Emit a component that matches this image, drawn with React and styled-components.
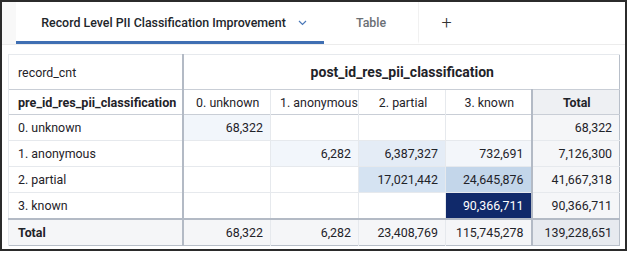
import React from 'react';
import styled, { createGlobalStyle, css } from 'styled-components';

const Global = createGlobalStyle`
  body {
    margin: 0;
    background: #fff;
    font-family: Roboto, "Liberation Sans", sans-serif;
    color: #1f2329;
  }
`;

const Frame = styled.div`
  box-sizing: border-box;
  width: 627px;
  height: 251px;
  border: 2px solid #2b2b2b;
  background: #fff;
`;

const TabBar = styled.div`
  display: flex;
  height: 42px;
  border-bottom: 1px solid #ececec;
  padding-left: 14px;
  background: linear-gradient(to right, #f8f8f8 14px, #fff 14px);
`;

const Tab = styled.div`
  display: flex;
  align-items: center;
  justify-content: center;
  gap: 12px;
  box-sizing: border-box;
  width: ${p => p.$w}px;
  padding: 2px 0 0 ${p => p.$indent || 0}px;
  font-size: 12.4px;
  font-weight: 500;
  color: ${p => (p.$active ? '#22262b' : '#6b7075')};
  border-bottom: 3px solid ${p => (p.$active ? '#3f6fb3' : 'transparent')};
  ${p => p.$divider && css`border-left: 1px solid #f1f1f1;`}
`;

const Chevron = () => (
  <svg width="9" height="6" viewBox="0 0 9 6">
    <path d="M1 1l3.5 3.5L8 1" fill="none" stroke="#4a78b8" strokeWidth="1.2" />
  </svg>
);

const Plus = styled.span`
  font-size: 18px;
  font-weight: 300;
  color: #333;
`;

const TableWrap = styled.div`
  padding: 9px 6px 0 6px;
`;

const Grid = styled.table`
  border-collapse: collapse;
  table-layout: fixed;
  width: 611px;
  border: 1px solid #b8bfc9;
`;

const Cell = styled.td`
  box-sizing: border-box;
  height: ${p => p.$h || 26}px;
  padding: 0 7px 0 9px;
  text-align: ${p => p.$align || 'right'};
  font-weight: ${p => (p.$bold ? 700 : 400)};
  font-size: ${p => p.$size || 12.4}px;
  background: ${p => p.$bg || '#fff'};
  color: ${p => p.$color || '#1f2329'};
  border-top: 1px solid #e6e9ed;
  border-left: 1px solid #e6e9ed;
  white-space: nowrap;
  overflow: hidden;
  ${p => p.$heavyLeft && css`border-left: 2px solid #b3bac5;`}
  ${p => p.$heavyTop && css`border-top: 2px solid #b3bac5;`}
  ${p => p.$midTop && css`border-top: 1px solid #c9ced6;`}
`;

const cols = ['0. unknown', '1. anonymous', '2. partial', '3. known'];

const rows = [
  { label: '0. unknown', vals: ['68,322', '', '', ''], bgs: ['#f2f6fb', '#fff', '#fff', '#fff'], total: '68,322' },
  { label: '1. anonymous', vals: ['', '6,282', '6,387,327', '732,691'], bgs: ['#fff', '#f2f6fb', '#e4ecf6', '#f3f6fa'], total: '7,126,300' },
  { label: '2. partial', vals: ['', '', '17,021,442', '24,645,876'], bgs: ['#fff', '#fff', '#d5e3f2', '#c3d6ea'], total: '41,667,318' },
  { label: '3. known', vals: ['', '', '', '90,366,711'], bgs: ['#fff', '#fff', '#fff', '#10296a'], total: '90,366,711' },
];

const totals = ['68,322', '6,282', '23,408,769', '115,745,278'];

export default function App() {
  return (
    <Frame>
      <Global />
      <TabBar>
        <Tab $w={308} $indent={8} $active>
          Record Level PII Classification Improvement <Chevron />
        </Tab>
        <Tab $w={94}>Table</Tab>
        <Tab $w={56} $divider>
          <Plus>+</Plus>
        </Tab>
      </TabBar>
      <TableWrap>
        <Grid>
          <colgroup>
            <col style={{ width: 174 }} />
            <col style={{ width: 88 }} />
            <col style={{ width: 88 }} />
            <col style={{ width: 87 }} />
            <col style={{ width: 86 }} />
            <col style={{ width: 88 }} />
          </colgroup>
          <tbody>
            <tr>
              <Cell $h={35} $align="left">record_cnt</Cell>
              <Cell $h={35} colSpan={5} $align="center" $bold $heavyLeft $size={14}>
                post_id_res_pii_classification
              </Cell>
            </tr>
            <tr>
              <Cell $h={25} $align="left" $bold $midTop $size={12.6}>pre_id_res_pii_classification</Cell>
              {cols.map((c, i) => (
                <Cell key={c} $h={25} $align="center" $midTop $heavyLeft={i === 0}>{c}</Cell>
              ))}
              <Cell $h={25} $align="center" $bold $midTop $heavyLeft $bg="#eef0f3">Total</Cell>
            </tr>
            {rows.map((r, ri) => (
              <tr key={r.label}>
                <Cell $align="left" $midTop={ri === 0}>{r.label}</Cell>
                {r.vals.map((v, i) => (
                  <Cell
                    key={i}
                    $midTop={ri === 0}
                    $heavyLeft={i === 0}
                    $bg={r.bgs[i]}
                    $color={r.bgs[i] === '#10296a' ? '#fff' : undefined}
                  >
                    {v}
                  </Cell>
                ))}
                <Cell $midTop={ri === 0} $heavyLeft $bg="#f5f6f8">{r.total}</Cell>
              </tr>
            ))}
            <tr>
              <Cell $h={27} $align="left" $bold $heavyTop $bg="#f5f6f8">Total</Cell>
              {totals.map((t, i) => (
                <Cell key={i} $h={27} $heavyTop $heavyLeft={i === 0} $bg="#f5f6f8">{t}</Cell>
              ))}
              <Cell $h={27} $heavyTop $heavyLeft $bg="#e7eaef">139,228,651</Cell>
            </tr>
          </tbody>
        </Grid>
      </TableWrap>
    </Frame>
  );
}
